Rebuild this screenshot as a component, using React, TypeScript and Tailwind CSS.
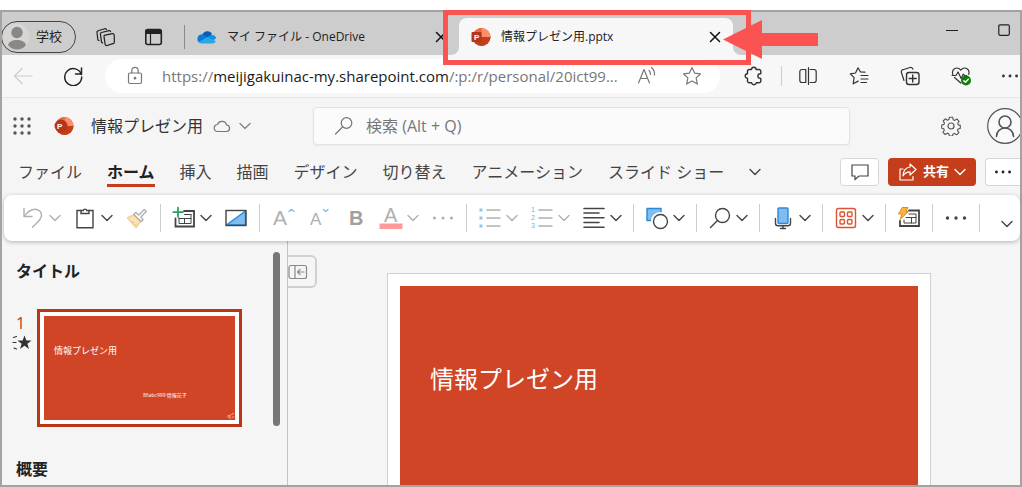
import type { ReactNode } from "react";

const stroke = {
    fill: "none",
    stroke: "currentColor",
    strokeWidth: 1.2,
    strokeLinecap: "round" as const,
    strokeLinejoin: "round" as const,
};

function Icon({ children, className = "size-5", box = 20 }: { children: ReactNode; className?: string; box?: number }) {
    return (
        <svg className={`${className} shrink-0`} viewBox={`0 0 ${box} ${box}`} {...stroke} aria-hidden="true">
            {children}
        </svg>
    );
}

function Chevron({ className = "" }: { className?: string }) {
    return (
        <svg className={`size-3 shrink-0 ${className}`} viewBox="0 0 12 12" {...stroke} strokeWidth={1.4} aria-hidden="true">
            <path d="M1 3.5l5 5 5-5" />
        </svg>
    );
}

function Dots({ className = "size-5" }: { className?: string }) {
    return (
        <svg className={`${className} shrink-0`} viewBox="0 0 20 20" fill="currentColor" aria-hidden="true">
            <circle cx="1.8" cy="10" r="1.8" />
            <circle cx="10" cy="10" r="1.8" />
            <circle cx="18.2" cy="10" r="1.8" />
        </svg>
    );
}

function CloseIcon() {
    return (
        <svg className="size-3" viewBox="0 0 12 12" {...stroke} strokeWidth={1.5} aria-hidden="true">
            <path d="M1.5 1.5l9 9M10.5 1.5l-9 9" />
        </svg>
    );
}

function PowerPointLogo({ round = false }: { round?: boolean }) {
    return (
        <svg className="size-5 shrink-0" viewBox="0 0 20 20" aria-hidden="true">
            <circle cx="10.5" cy="10" r="9" fill="#d35230" />
            <path d="M10.500 1a9 9 0 0 1 9 9h-9z" fill="#ff8f6b" />
            <path d="M1.500 10h18a9 9 0 0 1-18 0z" fill="#c43e1c" />
            <path d="M10.500 1A9 9 0 0 0 1.500 10h9z" fill="#ed6c47" />
            {round ? <circle cx="7" cy="10" r="6.500" fill="#b7351a" /> : <rect x="0.5" y="5" width="10" height="10" rx="1" fill="#b7351a" />}
            <text x="3" y="13" fontSize="8" fontWeight="700" fill="#fff" fontFamily="Liberation Sans, sans-serif">P</text>
        </svg>
    );
}

function OneDriveLogo() {
    return (
        <svg className="size-5 shrink-0" viewBox="0 0 20 20" aria-hidden="true">
            <path d="M5.2 8A5.6 5.6 0 0 1 15 6.6l-3 5.4z" fill="#0a5cb5" />
            <path d="M4.6 7.4a4.4 4.4 0 0 1 2.9.8l6 3.8L4 16.3A4.5 4.5 0 0 1 4.6 7.4z" fill="#0f78d4" />
            <path d="M10.5 10l2.2-1.4a4.4 4.4 0 0 1 3.1-.5 3.9 3.9 0 0 1 3.4 3.2l-3.7 2.5z" fill="#1490df" />
            <path d="M1.6 15l9-5 8.3 4.3A3.6 3.6 0 0 1 16 16.4H4.6A4.5 4.5 0 0 1 1.6 15z" fill="#28a8ea" />
        </svg>
    );
}

function Tab({ title, icon, active = false }: { title: string; icon: ReactNode; active?: boolean }) {
    return (
        <div
            className={
                active
                    ? "relative flex h-[37px] w-[274px] shrink-0 items-center rounded-t-lg bg-[#f7f7f7] px-3"
                    : "flex h-[37px] w-[274px] shrink-0 items-center px-3"
            }
        >
            {active && (
                <>
                    <svg className="absolute bottom-0 -left-2 size-2" viewBox="0 0 8 8" aria-hidden="true">
                        <path d="M8 0v8H0a8 8 0 0 0 8-8z" fill="#f7f7f7" />
                    </svg>
                    <svg className="absolute -right-2 bottom-0 size-2" viewBox="0 0 8 8" aria-hidden="true">
                        <path d="M0 0v8h8a8 8 0 0 1-8-8z" fill="#f7f7f7" />
                    </svg>
                </>
            )}
            <button type="button" role="tab" aria-selected={active} className="flex flex-1 items-center gap-[10px] text-xs text-[#222]">
                {icon}
                {title}
            </button>
            <button type="button" aria-label="タブを閉じる" className="text-[#111]">
                <CloseIcon />
            </button>
        </div>
    );
}

function TabBar() {
    return (
        <div className="flex h-[43px] shrink-0 items-end bg-[#cdcdcd] text-[#222]">
            <div className="flex h-[37px] items-center">
                <button type="button" className="-ml-px flex h-8 w-[75px] items-center gap-[6px] rounded-full border border-[#444] text-[13px]">
                    <svg className="size-7 shrink-0" viewBox="0 0 28 28" aria-hidden="true">
                        <circle cx="14" cy="14" r="13.5" fill="#d8d6d2" />
                        <circle cx="15" cy="9.5" r="5.7" fill="#8a8886" />
                        <path d="M6 22c1-3.500 4.500-5 9-5s8 1.500 9 5c-2 3-5.500 4.500-9 4.500S8 25 6 22z" fill="#8a8886" />
                    </svg>
                    学校
                </button>
                <button type="button" aria-label="ワークスペース" className="ml-5">
                    <Icon>
                        <path d="M9 8.200l7.500-1.500a1.400 1.400 0 0 1 1.700 1.300l.2 7a1.800 1.800 0 0 1-1.300 1.700L11 18.500a1.500 1.500 0 0 1-1.900-1.300L8 9.700A1.300 1.300 0 0 1 9 8.200z" />
                        <path d="M6.600 15.800a1.400 1.400 0 0 1-1.200-1.200L4.400 7.200a1.500 1.500 0 0 1 1.100-1.700l7.400-1.900a1.400 1.400 0 0 1 1.700 1" />
                        <path d="M3 13.500a1.400 1.400 0 0 1-1.200-1.200L1 5.500a1.500 1.500 0 0 1 1.100-1.700L8.800 1.700a1.400 1.400 0 0 1 1.600.8" />
                    </Icon>
                </button>
                <button type="button" aria-label="タブ操作メニュー" className="ml-7">
                    <Icon>
                        <rect x="1.800" y="2.500" width="15.500" height="15" rx="2" strokeWidth="1.600" />
                        <path d="M2 3.500h15v3H2z" fill="currentColor" />
                        <path d="M6.500 7v10" />
                    </Icon>
                </button>
                <span className="ml-5 h-6 w-px bg-[#8a8a8a]" />
            </div>
            <div role="tablist" className="flex">
                <Tab title="マイ ファイル - OneDrive" icon={<OneDriveLogo />} />
                <Tab title="情報プレゼン用.pptx" icon={<PowerPointLogo />} active />
            </div>
            <div className="ml-auto flex items-center gap-10 self-start pt-3 pr-[10px]">
                <button type="button" aria-label="最小化">
                    <svg className="size-3" viewBox="0 0 12 12" {...stroke} aria-hidden="true">
                        <path d="M0 6.500h12" />
                    </svg>
                </button>
                <button type="button" aria-label="最大化">
                    <svg className="size-3" viewBox="0 0 12 12" {...stroke} aria-hidden="true">
                        <rect x=".8" y=".8" width="10.500" height="10.500" rx="1.200" />
                    </svg>
                </button>
            </div>
        </div>
    );
}

function AddressBar() {
    return (
        <div className="flex h-[43px] shrink-0 items-center border-b border-[#e6e6e6] bg-[#f7f7f7] pr-[2px] pl-[11px] text-[#333]">
            <button type="button" aria-label="戻る" className="text-[#ccc]">
                <Icon>
                    <path d="M19 10H1.500M9 2.500L1.500 10 9 17.500" />
                </Icon>
            </button>
            <button type="button" aria-label="更新" className="ml-[30px] text-[#222]">
                <Icon>
                    <path d="M18.300 8.500A8.500 8.500 0 1 0 18.700 11M18.500 2v6h-6" strokeWidth="1.500" />
                </Icon>
            </button>
            <div className="ml-[22px] flex h-[34px] min-w-0 flex-1 items-center rounded-full bg-white pr-[18px] pl-5 text-[#777]">
                <Icon>
                    <rect x="3.500" y="7" width="13" height="10.500" rx="1.500" />
                    <path d="M6.800 7V4.500a3.200 3.200 0 0 1 6.400 0V7" />
                    <circle cx="10" cy="12.200" r=".8" fill="currentColor" />
                </Icon>
                <button type="button" aria-label="アドレス バー" className="ml-[17px] min-w-0 flex-1 overflow-hidden text-left text-[15px] whitespace-nowrap">
                    https://<span className="text-[#1b1b1b]">meijigakuinac-my.sharepoint.com</span>/:p:/r/personal/20ict99...
                </button>
                <button type="button" aria-label="音声で読み上げる">
                    <Icon>
                        <path d="M1.500 17L7 3.500 12.500 17M3.500 12.500h7" />
                        <path d="M12 4.500a5 5 0 0 1 1.500 4M14.500 1.500a9 9 0 0 1 3 7.500" />
                    </Icon>
                </button>
                <button type="button" aria-label="お気に入りに追加" className="ml-[25px]">
                    <Icon>
                        <path d="M10 1.500l2.600 5.600 6 .7-4.500 4.100 1.300 6.200L10 15l-5.400 3.100 1.300-6.200L1.400 7.800l6-.7z" />
                    </Icon>
                </button>
            </div>
            <button type="button" aria-label="拡張機能" className="ml-6">
                <Icon>
                    <path
                        strokeWidth="1.400"
                        d="M7.500 3.500a2.300 2.300 0 0 1 4.600 0H15a1.800 1.800 0 0 1 1.800 1.800v2.500h-.6a2.300 2.300 0 0 0 0 4.600h.6V15a1.800 1.800 0 0 1-1.800 1.800h-2.700a2.400 2.400 0 0 1-4.700 0H5.300A1.800 1.800 0 0 1 3.500 15v-2.700a2.300 2.300 0 0 1 0-4.600V5.300a1.800 1.800 0 0 1 1.800-1.800z"
                    />
                </Icon>
            </button>
            <span className="mr-4 ml-[17px] h-5 w-px bg-[#ccc]" />
            <div className="flex items-center gap-[31px]">
                <button type="button" aria-label="分割画面" className="block">
                    <Icon>
                        <path d="M7.800 3.500H4a2.200 2.200 0 0 0-2.200 2.200v8.600A2.200 2.200 0 0 0 4 16.500h3.800zM12.200 3.500H16a2.200 2.200 0 0 1 2.200 2.200v8.600a2.200 2.200 0 0 1-2.200 2.200h-3.800M10.500 1.500v17" />
                    </Icon>
                </button>
                <button type="button" aria-label="お気に入り">
                    <Icon>
                        <path d="M16 6.200l-4.500-.2L9 1.800 6.500 7l-5.200.8 3.800 3.900-.9 6.100 5-2.700M12 9.500h7M12 13h7M12 16.500h5.500" />
                    </Icon>
                </button>
                <button type="button" aria-label="コレクション">
                    <Icon>
                        <rect x="6.500" y="6.500" width="12.500" height="12" rx="2.500" strokeWidth="1.400" />
                        <path d="M12.700 9v7M9.200 12.500h7" strokeWidth="1.400" />
                        <path d="M4 14.500l-2.600-8A2.200 2.200 0 0 1 2.900 3.700l7.200-2.200a2.200 2.200 0 0 1 2.800 1.600" />
                    </Icon>
                </button>
                <button type="button" aria-label="ブラウザーのエッセンシャル">
                    <Icon>
                        <path d="M1.800 8.500C.4 5 3 2 5.800 2c1.700 0 3 .8 4 2.200C10.800 2.800 12 2 13.700 2c2.900 0 5.400 3 4 6.500M3.500 11.500L9.800 17" />
                        <path d="M1 9.500h4l2-3.500 3.200 6.500L12.300 8l1.200 1.500h2" />
                        <circle cx="15" cy="14.500" r="5" fill="#107c10" stroke="none" />
                        <path d="M12.800 14.700l1.600 1.500 2.900-3" stroke="#fff" strokeWidth="1.500" />
                    </Icon>
                </button>
                <button type="button" aria-label="設定など">
                    <Dots className="size-4" />
                </button>
            </div>
        </div>
    );
}

function AppHeader() {
    return (
        <header className="flex h-14 shrink-0 items-center text-[#555]">
            <div className="flex w-[311px] shrink-0 items-center pl-[10px]">
                <button type="button" aria-label="アプリ起動ツール">
                    <svg className="size-5" viewBox="0 0 20 20" fill="#555" aria-hidden="true">
                        {[3, 10, 17].map((y) => [3, 10, 17].map((x) => <circle key={`${x}-${y}`} cx={x} cy={y} r="1.700" />))}
                    </svg>
                </button>
                <span className="ml-[22px]">
                    <PowerPointLogo round />
                </span>
                <button type="button" className="ml-[17px] flex items-center text-base text-[#333]">
                    情報プレゼン用
                    <span className="mr-2 ml-[10px] text-[#777]">
                        <Icon className="size-[18px]" box={18}>
                            <path d="M5 14.500a3.500 3.500 0 0 1-.5-7A4.800 4.800 0 0 1 13.600 8 3.300 3.300 0 0 1 14 14.500z" />
                        </Icon>
                    </span>
                    <Chevron className="text-[#888]" />
                </button>
            </div>
            <label className="flex h-[38px] min-w-0 flex-1 items-center gap-3 rounded border border-[#e3e3e3] bg-[#fbfbfb] px-5 text-[#777] shadow-xs">
                <Icon>
                    <circle cx="12.500" cy="7" r="5.300" />
                    <path d="M8.500 11L1.500 18" />
                </Icon>
                <input
                    type="search"
                    aria-label="検索"
                    placeholder="検索 (Alt + Q)"
                    className="min-w-0 flex-1 bg-transparent text-base outline-none placeholder:text-[#777]"
                />
            </label>
            <div className="flex w-[170px] shrink-0 items-center pl-[91px]">
                <button type="button" aria-label="設定">
                    <Icon>
                        <circle cx="10" cy="10" r="3" />
                        <path d="M8.300 1.300h3.400l.5 2.400 1.500.7 2.200-1.400 2.200 2.300-1.400 2.200.6 1.400 2 .5v3l-2.200.6-.6 1.400 1.400 2.200-2.300 2.200-2.200-1.400-1.300.6-.6 2H8.400l-.6-2.200-1.400-.6-2.200 1.300L2 16.300l1.300-2.100-.6-1.400-2-.6V9l2.200-.6.600-1.300L2.200 5l2.100-2.200 2.200 1.400 1.400-.6z" strokeWidth="1.100" />
                    </Icon>
                </button>
                <button type="button" aria-label="アカウント" className="ml-[26px]">
                    <Icon className="size-9" box={36}>
                        <circle cx="18" cy="18" r="17.300" fill="#fafafa" />
                        <circle cx="18" cy="14" r="6" strokeWidth="1.600" />
                        <path d="M9.500 28.500c0-5 3.800-8.500 8.500-8.500s8.500 3.500 8.500 8.500" strokeWidth="1.600" />
                    </Icon>
                </button>
            </div>
        </header>
    );
}

const MENU = ["ファイル", "ホーム", "挿入", "描画", "デザイン", "切り替え", "アニメーション", "スライド ショー"];

function MenuRow() {
    return (
        <div className="mb-[5px] flex h-9 shrink-0 items-center pl-4 text-[#444]">
            <nav className="flex items-center gap-[25px] text-base whitespace-nowrap">
                {MENU.map((name) => (
                    <button
                        key={name}
                        type="button"
                        className={
                            name === "ホーム"
                                ? "relative font-bold text-[#222] after:absolute after:inset-x-0 after:-bottom-[3px] after:h-[3px] after:bg-[#c43e1c]"
                                : ""
                        }
                    >
                        {name}
                    </button>
                ))}
                <button type="button" aria-label="その他のタブ">
                    <Chevron />
                </button>
            </nav>
            <div className="ml-auto flex items-center gap-[9px]">
                <button type="button" aria-label="コメント" className="flex h-7 w-[39px] items-center justify-center rounded border border-[#d6d6d6] bg-white">
                    <Icon>
                        <path d="M2 3h16v11H9l-4 3.500V14H2z" strokeLinejoin="miter" />
                    </Icon>
                </button>
                <button type="button" className="flex h-7 w-[88px] items-center justify-center gap-[5px] rounded bg-[#c43e1c] text-[13px] font-bold text-white">
                    <Icon>
                        <path d="M5 7H2v11h13v-3.500" />
                        <path d="M12 2l6 5.500-6 5.500V9.800c-3 0-5 1-7 4 .3-5 3-8.300 7-8.800z" />
                    </Icon>
                    共有
                    <Chevron />
                </button>
                <button type="button" aria-label="その他" className="flex h-7 w-[35px] items-center justify-center rounded-l border border-r-0 border-[#d6d6d6] bg-white text-[#222]">
                    <Dots className="size-4" />
                </button>
            </div>
        </div>
    );
}

function Tool({ label, children, menu = false, muted = false }: { label: string; children: ReactNode; menu?: boolean; muted?: boolean }) {
    return (
        <button type="button" aria-label={label} className={muted ? "flex shrink-0 items-center gap-1 text-[#b0b0b0]" : "flex shrink-0 items-center gap-1 text-[#444]"}>
            <svg className="size-6 shrink-0 overflow-visible" viewBox="0 0 24 24" {...stroke} strokeWidth={1.4} aria-hidden="true">
                {children}
            </svg>
            {menu && <Chevron />}
        </button>
    );
}

function Group({ children }: { children: ReactNode }) {
    return <div className="flex h-7 shrink-0 items-center gap-3 border-r border-[#ccc] px-[11px]">{children}</div>;
}

function Ribbon() {
    return (
        <div className="relative z-10 ml-[2px] flex h-[46px] shrink-0 items-center rounded-lg bg-white pl-[6px] shadow-[0_1px_4px_rgba(0,0,0,0.28)]">
            <Group>
                <Tool label="元に戻す" menu muted>
                    <path d="M3 2.500v8h8" />
                    <path d="M3.500 10C6 6.500 9.500 3.200 14 3.200c4 0 6.500 2.800 6.500 6 0 4.500-4.500 7.500-9 12" />
                </Tool>
                <Tool label="貼り付け" menu>
                    <path d="M8 4.500H4v17.300h16V4.500h-4" strokeLinejoin="miter" />
                    <path d="M8 7.500V4.500h2.300a1.800 1.800 0 0 1 3.500 0H16v3z" strokeLinejoin="miter" />
                </Tool>
                <Tool label="書式のコピー/貼り付け" muted>
                    <path d="M2.500 12l6-3 7 6.500-4.500 6z" fill="#fbe3b8" stroke="#f2cf94" />
                    <path d="M6 15.500l3 1M8.500 18.500l2.500.5" stroke="#f2cf94" />
                    <path d="M8.800 8.500l2-2 3 2.500 5.500-5.500 2 2-5.500 5.500 2.300 2.500-2 2z" fill="#fff" />
                </Tool>
            </Group>
            <Group>
                <Tool label="新しいスライド" menu>
                    <path d="M12 5h10v15.500H3.500V12.500" strokeLinejoin="miter" strokeWidth="1.800" />
                    <path d="M12.500 8.500H19M7 12v5.500h12V8.500M7 12.500h12M12.500 12.500v5" strokeWidth="1" />
                    <path d="M6 1.500v9.500M1.300 6.200h9.500" stroke="#26a05a" strokeWidth="1.700" />
                </Tool>
                <Tool label="レイアウト">
                    <path d="M2.500 19L21.500 5v14z" fill="#7fbdf0" stroke="#2b88d8" />
                    <rect x="2" y="4.500" width="20" height="15" strokeLinejoin="miter" />
                </Tool>
            </Group>
            <Group>
                <Tool label="フォント サイズの拡大" muted>
                    <text x="2" y="19" fontSize="21" fill="currentColor" stroke="none" fontFamily="Liberation Sans, sans-serif">A</text>
                    <path d="M18 5.500l2.500-2.300L23 5.500" stroke="#7cc4ee" />
                </Tool>
                <Tool label="フォント サイズの縮小" muted>
                    <text x="3" y="19" fontSize="17" fill="currentColor" stroke="none" fontFamily="Liberation Sans, sans-serif">A</text>
                    <path d="M16.500 3.500l2.300 2L21 3.500" stroke="#7cc4ee" />
                </Tool>
                <Tool label="太字" muted>
                    <text x="6" y="19" fontSize="20" fontWeight="700" fill="#a0a0a0" stroke="none" fontFamily="Liberation Sans, sans-serif">B</text>
                </Tool>
                <Tool label="フォントの色" menu muted>
                    <text x="5" y="16" fontSize="20" fill="currentColor" stroke="none" fontFamily="Liberation Sans, sans-serif">A</text>
                    <path d="M.5 17.500h23v5.500H.5z" fill="#ff9a9a" stroke="none" />
                </Tool>
                <Tool label="その他のフォント オプション" muted>
                    <g fill="currentColor" stroke="none">
                        <circle cx="3.500" cy="12" r="1.600" />
                        <circle cx="12" cy="12" r="1.600" />
                        <circle cx="20.500" cy="12" r="1.600" />
                    </g>
                </Tool>
            </Group>
            <Group>
                <Tool label="箇条書き" menu muted>
                    <path d="M9 4h13M9 12h13M9 20h13" />
                    <path d="M1.500 2.500h3v3h-3zM1.500 10.500h3v3h-3zM1.500 18.500h3v3h-3z" fill="#8ccbf0" stroke="none" />
                </Tool>
                <Tool label="段落番号" menu muted>
                    <path d="M9 4h13M9 12h13M9 20h13" />
                    <g fontSize="7" fill="#5fb6ea" stroke="none" fontFamily="Liberation Sans, sans-serif">
                        <text x="1" y="6">1</text>
                        <text x="1" y="14">2</text>
                        <text x="1" y="22">3</text>
                    </g>
                </Tool>
                <Tool label="配置" menu>
                    <path d="M2 2.500h20M2 7h15M2 11.800h20M2 16.500h15M2 21.200h20" strokeWidth="1.600" />
                </Tool>
            </Group>
            <Group>
                <Tool label="図形" menu>
                    <path d="M2 2.500h14v12H2z" fill="#7fbdf0" stroke="#2b88d8" />
                    <circle cx="15" cy="15" r="9" fill="#fff" stroke="none" />
                    <circle cx="15.500" cy="15.500" r="7" />
                </Tool>
            </Group>
            <Group>
                <Tool label="検索" menu>
                    <circle cx="14.500" cy="9.500" r="7" />
                    <path d="M9.500 14.500L2.500 21.500" />
                </Tool>
            </Group>
            <Group>
                <Tool label="ディクテーション" menu>
                    <rect x="7" y="2" width="10" height="15.500" rx="1" fill="#7fbdf0" stroke="#2b88d8" />
                    <path d="M4.500 12.500v4.800A2.500 2.500 0 0 0 7 19.800h10a2.500 2.500 0 0 0 2.500-2.500v-4.800M12 20v2.500M9.500 22.500h5" />
                </Tool>
            </Group>
            <Group>
                <Tool label="アドイン" menu>
                    <g stroke="#d8552f">
                        <rect x="2.500" y="2.500" width="19" height="19" rx="2" />
                        <rect x="6" y="6" width="4.500" height="4.500" rx="1" />
                        <rect x="13.500" y="6" width="4.500" height="4.500" rx="1" />
                        <rect x="6" y="13.500" width="4.500" height="4.500" rx="1" />
                        <rect x="13.500" y="13.500" width="4.500" height="4.500" rx="1" />
                    </g>
                </Tool>
            </Group>
            <Group>
                <Tool label="デザイナー">
                    <path d="M12 4.500h10v15.500H3V15" strokeLinejoin="miter" strokeWidth="1.800" />
                    <path d="M12 8h7v9H7v-3M9 11.500h10M14.500 11.500V17" strokeWidth="1" />
                    <path d="M5.500 1.500H11L9 5.500h2.500L3 13.500 5 8H1.800z" fill="#fbb040" stroke="#e8891c" strokeWidth="1" />
                </Tool>
            </Group>
            <Group>
                <Tool label="その他のコマンド">
                    <g fill="currentColor" stroke="none">
                        <circle cx="3.500" cy="12" r="1.700" />
                        <circle cx="12" cy="12" r="1.700" />
                        <circle cx="20.500" cy="12" r="1.700" />
                    </g>
                </Tool>
            </Group>
            <button type="button" aria-label="リボンの表示オプション" className="mr-[7px] mb-[11px] ml-auto self-end text-[#444]">
                <Chevron />
            </button>
        </div>
    );
}

function SlidePanel() {
    return (
        <aside className="flex w-[286px] shrink-0 border-r border-[#c4c4c4]">
            <div className="flex-1 pt-[18px] pl-[10px]">
                <h2 className="pl-1 text-base font-bold text-[#222]">タイトル</h2>
                <div className="mt-[26px] flex">
                    <div className="w-[25px] pt-1 text-[#333]">
                        <p className="pl-1 text-base leading-5 text-[#b83a1b]">1</p>
                        <Icon>
                            <path d="M12.500 2.500l1.900 5h5.200l-4.200 3.200 1.600 5.200-4.500-3.100L8 15.900l1.600-5.200L5.400 7.500h5.200z" fill="currentColor" stroke="none" />
                            <path d="M1.500 4.500l3-1M1 9.500h3M2 15l2.500 1" />
                        </Icon>
                    </div>
                    <button type="button" aria-label="スライド 1" className="flex h-[118px] w-[205px] flex-col border-[3px] border-[#bb3517] bg-white p-1">
                        <span className="flex w-full flex-1 flex-col bg-[#d04525] pt-[27px] text-left text-white">
                            <span className="pl-[10px] text-[9px] leading-4">情報プレゼン用</span>
                            <span className="mt-7 pl-[99px] text-[5px] leading-4">86abc999 情報花子</span>
                            <svg className="mt-auto ml-auto size-2" viewBox="0 0 8 8" {...stroke} stroke="#f0b5a5" strokeWidth={1} aria-hidden="true">
                                <path d="M1 4l2-1v3zM4.500 2.500l2-1M5 6l1.500-1.500" />
                            </svg>
                        </span>
                    </button>
                </div>
                <h2 className="mt-[30px] pl-1 text-base font-bold text-[#222]">概要</h2>
            </div>
            <div className="mt-[11px] mr-[7px] h-[174px] w-[7px] rounded-full bg-[#777]" />
        </aside>
    );
}

export default function App() {
    return (
        <div className="relative flex h-screen flex-col overflow-hidden bg-white pt-[10px] font-['Open_Sans','Noto_Sans_CJK_JP',sans-serif]">
            <div className="flex min-h-0 flex-1 flex-col overflow-hidden border-2 border-[#a3a3a3] bg-[#f5f5f5]">
                <TabBar />
                <AddressBar />
                <AppHeader />
                <MenuRow />
                <Ribbon />
                <div className="flex min-h-0 flex-1 overflow-hidden">
                    <SlidePanel />
                    <button
                        type="button"
                        aria-label="サムネイルを折りたたむ"
                        className="mt-[14px] flex h-[33px] w-[29px] shrink-0 items-center rounded-r-md border-2 border-l-0 border-[#d0d0d0] text-[#888]"
                    >
                        <Icon>
                            <rect x="1" y="3.500" width="17.500" height="13" rx="2" />
                            <path d="M7 3.500v13M16 10H9.500M12 7.500L9.500 10l2.500 2.500" />
                        </Icon>
                    </button>
                    <main className="mt-8 mr-[89px] ml-[70px] flex flex-1 border border-b-0 border-[#d0d0d0] bg-white px-3 pt-3">
                        <h1 className="flex-1 bg-[#d04525] pt-[77px] pl-[30px] text-2xl text-white">情報プレゼン用</h1>
                    </main>
                </div>
            </div>
            {/* callout around the open file's tab */}
            <div className="absolute top-[10px] left-[443px] h-[55px] w-[308px] border-[5px] border-[#fa5352]" />
            <svg className="absolute top-5 left-[723px] h-[39px] w-24" viewBox="0 0 96 39" fill="#fa5352" aria-hidden="true">
                <path d="M0 19.500L39 0v13h56v13H39v13z" />
            </svg>
        </div>
    );
}
